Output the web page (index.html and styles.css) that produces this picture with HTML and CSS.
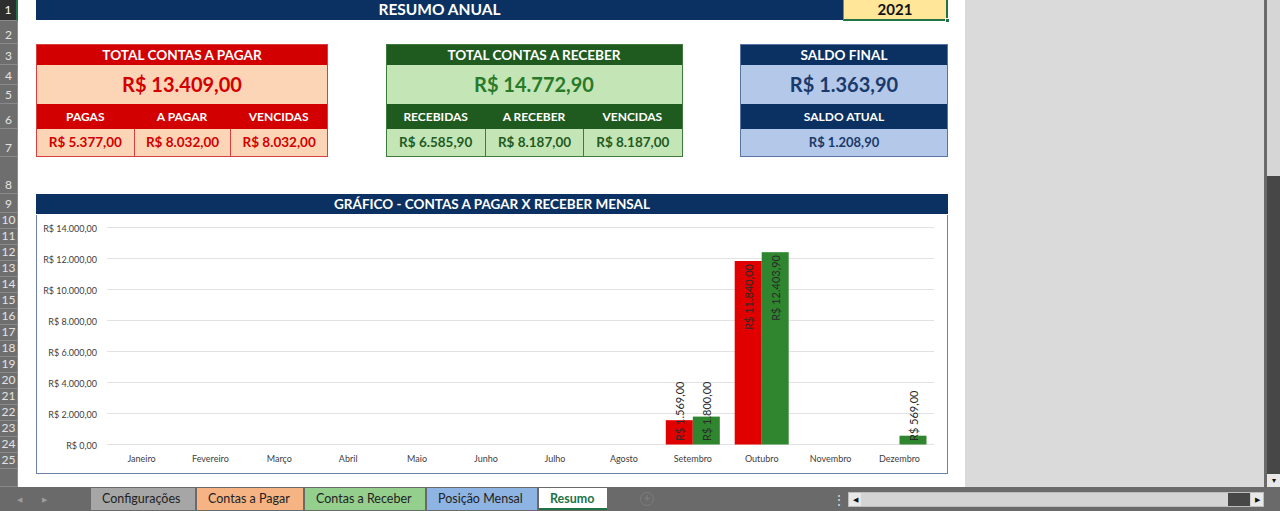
FILE: index.html
```html
<!DOCTYPE html>
<html lang="pt-BR">
<head>
<meta charset="utf-8">
<title>Resumo Anual</title>
<link rel="stylesheet" href="styles.css">
</head>
<body>
<div class="app">
  <!-- row numbers -->
  <div class="rowheads">
    <div class="rh sel">1</div>
    <div class="rh">2</div>
    <div class="rh">3</div>
    <div class="rh">4</div>
    <div class="rh">5</div>
    <div class="rh">6</div>
    <div class="rh">7</div>
    <div class="rh">8</div>
    <div class="rh">9</div>
    <div class="rh">10</div>
    <div class="rh">11</div>
    <div class="rh">12</div>
    <div class="rh">13</div>
    <div class="rh">14</div>
    <div class="rh">15</div>
    <div class="rh">16</div>
    <div class="rh">17</div>
    <div class="rh">18</div>
    <div class="rh">19</div>
    <div class="rh">20</div>
    <div class="rh">21</div>
    <div class="rh">22</div>
    <div class="rh">23</div>
    <div class="rh">24</div>
    <div class="rh">25</div>
    <div class="rh"></div>
  </div>

  <main class="sheet">
    <div class="titlebar">
      <div class="title">RESUMO ANUAL</div>
      <div class="year">2021<span class="handle"></span></div>
    </div>

    <div class="cards">
      <section class="card red">
        <div class="card-head">TOTAL CONTAS A PAGAR</div>
        <div class="card-total">R$ 13.409,00</div>
        <div class="card-subs">
          <div>PAGAS</div><div>A PAGAR</div><div>VENCIDAS</div>
        </div>
        <div class="card-vals">
          <div>R$ 5.377,00</div><div>R$ 8.032,00</div><div>R$ 8.032,00</div>
        </div>
      </section>

      <section class="card green">
        <div class="card-head">TOTAL CONTAS A RECEBER</div>
        <div class="card-total">R$ 14.772,90</div>
        <div class="card-subs">
          <div>RECEBIDAS</div><div>A RECEBER</div><div>VENCIDAS</div>
        </div>
        <div class="card-vals">
          <div>R$ 6.585,90</div><div>R$ 8.187,00</div><div>R$ 8.187,00</div>
        </div>
      </section>

      <section class="card blue">
        <div class="card-head">SALDO FINAL</div>
        <div class="card-total">R$ 1.363,90</div>
        <div class="card-subs single"><div>SALDO ATUAL</div></div>
        <div class="card-vals single"><div>R$ 1.208,90</div></div>
      </section>
    </div>

    <section class="chart">
      <div class="chart-head">GRÁFICO - CONTAS A PAGAR X RECEBER MENSAL</div>
      <div class="chart-body">
        <svg class="plot" width="910" height="257" viewBox="0 0 910 257">
          <g class="grid">
            <line x1="70" y1="12.5" x2="897" y2="12.5"/>
            <line x1="70" y1="43.5" x2="897" y2="43.5"/>
            <line x1="70" y1="74.5" x2="897" y2="74.5"/>
            <line x1="70" y1="105.5" x2="897" y2="105.5"/>
            <line x1="70" y1="136.5" x2="897" y2="136.5"/>
            <line x1="70" y1="167.5" x2="897" y2="167.5"/>
            <line x1="70" y1="198.5" x2="897" y2="198.5"/>
            <line x1="70" y1="229.5" x2="897" y2="229.5"/>
          </g>
          <g class="ylab">
            <text x="60" y="13">R$ 14.000,00</text>
            <text x="60" y="44">R$ 12.000,00</text>
            <text x="60" y="75">R$ 10.000,00</text>
            <text x="60" y="106">R$ 8.000,00</text>
            <text x="60" y="137">R$ 6.000,00</text>
            <text x="60" y="168">R$ 4.000,00</text>
            <text x="60" y="199">R$ 2.000,00</text>
            <text x="60" y="230">R$ 0,00</text>
          </g>
          <g class="xlab">
            <text x="104.5" y="243">Janeiro</text>
            <text x="173.4" y="243">Fevereiro</text>
            <text x="242.3" y="243">Março</text>
            <text x="311.2" y="243">Abril</text>
            <text x="380.1" y="243">Maio</text>
            <text x="449" y="243">Junho</text>
            <text x="518" y="243">Julho</text>
            <text x="586.9" y="243">Agosto</text>
            <text x="655.8" y="243">Setembro</text>
            <text x="724.7" y="243">Outubro</text>
            <text x="793.6" y="243">Novembro</text>
            <text x="862.5" y="243">Dezembro</text>
          </g>
          <g class="bars">
            <rect class="pay" x="628.8" y="205.2" width="27" height="24.3"/>
            <rect class="rec" x="655.8" y="201.6" width="27" height="27.9"/>
            <rect class="pay" x="697.7" y="46" width="27" height="183.5"/>
            <rect class="rec" x="724.7" y="37.2" width="27" height="192.3"/>
            <rect class="rec" x="862.5" y="220.7" width="27" height="8.8"/>
          </g>
          <g class="vlab">
            <text class="from-base" transform="translate(642.3 226) rotate(-90)">R$ 1.569,00</text>
            <text class="from-base" transform="translate(669.3 226) rotate(-90)">R$ 1.800,00</text>
            <text class="from-top" transform="translate(711.2 49) rotate(-90)">R$ 11.840,00</text>
            <text class="from-top" transform="translate(738.2 40) rotate(-90)">R$ 12.403,90</text>
            <text class="from-base" transform="translate(876 226) rotate(-90)">R$ 569,00</text>
          </g>
        </svg>
      </div>
    </section>
  </main>

  <div class="gray"></div>

  <div class="vscroll">
    <div class="vtrack"></div>
    <div class="vthumb"></div>
    <div class="vbtn">&#9662;</div>
  </div>

  <footer class="tabbar">
    <div class="nav"><span>&#9664;</span><span>&#9654;</span></div>
    <div class="tabs">
      <div class="tab t-config">Configurações</div>
      <div class="tab t-pagar">Contas a Pagar</div>
      <div class="tab t-receber">Contas a Receber</div>
      <div class="tab t-posicao">Posição Mensal</div>
      <div class="tab t-resumo">Resumo</div>
    </div>
    <div class="addsheet">+</div>
    <div class="dots">&#8942;</div>
    <div class="hscroll">
      <div class="hbtn">&#9664;</div>
      <div class="htrack"></div>
      <div class="hthumb"></div>
      <div class="hbtn">&#9654;</div>
    </div>
  </footer>
</div>
</body>
</html>
```

FILE: styles.css
```css
* { box-sizing: border-box; }

html, body {
  margin: 0;
  padding: 0;
  width: 1280px;
  height: 511px;
  overflow: hidden;
  background: #6a6a6a;
  font-family: Lato, "Open Sans", sans-serif;
}

.app {
  display: grid;
  grid-template-columns: 18px 947px 299px 16px;
  grid-template-rows: 487px 24px;
  width: 1280px;
  height: 511px;
}

/* ---------- row numbers ---------- */
.rowheads {
  display: grid;
  grid-template-rows: 21px 23px 21px 20px 19px 25px 28px 37px 19px repeat(16, 16px) 1fr;
  background: #6e6e6e;
}
.rh {
  display: flex;
  align-items: flex-end;
  justify-content: center;
  padding-bottom: 1px;
  font-size: 12px;
  line-height: 14px;
  color: #e4e4e4;
  border-bottom: 1px solid #8a8a8a;
  border-right: 1px solid #8a8a8a;
}
.rh.sel {
  background: #2e2e2e;
  color: #fff;
  border-right: 2px solid #217346;
  align-items: center;
}

/* ---------- sheet ---------- */
.sheet {
  background: #fff;
  padding-left: 18px;
  display: flex;
  flex-direction: column;
}

.titlebar {
  display: flex;
  width: 912px;
  height: 21px;
}
.title {
  width: 807px;
  height: 20px;
  background: #0a3161;
  color: #fff;
  font-weight: 700;
  font-size: 15.5px;
  line-height: 18px;
  text-align: center;
}
.year {
  position: relative;
  width: 105px;
  background: #ffe699;
  border-left: 1px solid #5f9a6c;
  border-right: 2px solid #217346;
  border-bottom: 2px solid #217346;
  font-weight: 700;
  font-size: 15px;
  line-height: 19px;
  text-align: center;
  color: #111;
}
.handle {
  position: absolute;
  right: -4px;
  bottom: -4px;
  width: 5px;
  height: 5px;
  background: #217346;
  border: 1px solid #fff;
}

/* ---------- summary cards ---------- */
.cards {
  display: flex;
  justify-content: space-between;
  width: 912px;
  margin-top: 23px;
}
.card {
  display: grid;
  grid-template-rows: 20px 39px 25px 27px;
  border: 1px solid var(--line);
  background: var(--soft);
  text-align: center;
}
.card.red   { width: 292px; --dark: #d20000; --soft: #fcd5b6; --line: #d84040; --ink: #d20000; --big: #d20000; }
.card.green { width: 297px; --dark: #1f5b1f; --soft: #c4e6b7; --line: #3f7a3c; --ink: #1f5b1f; --big: #2a7a2a; }
.card.blue  { width: 208px; --dark: #0a3161; --soft: #b4c8ea; --line: #5b74a3; --ink: #1a3a6b; --big: #1a3a6b; }

.card-head {
  background: var(--dark);
  color: #fff;
  font-weight: 700;
  font-size: 13.6px;
  line-height: 20px;
}
.card-total {
  color: var(--big);
  font-weight: 700;
  font-size: 20px;
  line-height: 39px;
}
.card-subs {
  display: grid;
  grid-template-columns: 1fr 1fr 1fr;
  background: var(--dark);
  color: #fff;
  font-weight: 700;
  font-size: 12px;
  line-height: 25px;
}
.card-vals {
  display: grid;
  grid-template-columns: 1fr 1fr 1fr;
  color: var(--ink);
  font-weight: 700;
  font-size: 13.5px;
  line-height: 27px;
}
.card-vals > div + div { border-left: 1px solid var(--line); }
.card-subs.single, .card-vals.single { grid-template-columns: 1fr; }
.card-vals.single { font-size: 13px; }

/* ---------- chart ---------- */
.chart {
  width: 912px;
  margin-top: 37px;
}
.chart-head {
  height: 20px;
  background: #0a3161;
  color: #fff;
  font-weight: 700;
  font-size: 13.5px;
  line-height: 20px;
  text-align: center;
}
.chart-body {
  height: 259px;
  border: 1px solid #6b82a6;
  border-top: 0;
  background: #fff;
}
.plot { display: block; margin-top: 1px; }
.grid line { stroke: #e2e2e2; stroke-width: 1; }
.ylab text {
  font-size: 9px;
  fill: #404040;
  text-anchor: end;
  dominant-baseline: central;
}
.xlab text {
  font-size: 9px;
  fill: #404040;
  text-anchor: middle;
  dominant-baseline: central;
}
.bars .pay { fill: #e00000; }
.bars .rec { fill: #2f862f; }
.vlab text {
  font-size: 11px;
  fill: #2a2a2a;
  dominant-baseline: central;
}
.vlab .from-base { text-anchor: start; }
.vlab .from-top { text-anchor: end; }

/* ---------- right side ---------- */
.gray {
  background: #dadada;
}
.vscroll {
  display: flex;
  flex-direction: column;
  border-left: 3px solid #6a6a6a;
  background: #d6d6d6;
}
.vtrack { height: 176px; background: #d6d6d6; }
.vthumb { flex: 1; background: #474747; }
.vbtn {
  height: 13px;
  background: #e8e8e8;
  font-size: 8px;
  line-height: 13px;
  text-align: center;
  color: #111;
}

/* ---------- sheet tabs bar ---------- */
.tabbar {
  grid-column: 1 / -1;
  display: flex;
  align-items: center;
  background: #6a6a6a;
  height: 24px;
}
.nav {
  display: flex;
  width: 91px;
  padding-left: 17px;
  gap: 20px;
  font-size: 7px;
  color: #9c9c9c;
}
.tabs {
  display: flex;
  gap: 2px;
  height: 22px;
  align-self: flex-start;
  margin-top: 1px;
}
.tab {
  padding: 0 11px;
  font-size: 12.5px;
  line-height: 22px;
  color: #222;
  white-space: nowrap;
}
.t-config  { width: 104px; background: #a6a6a6; }
.t-pagar   { width: 106px; background: #f6b485; }
.t-receber { width: 120px; background: #95cf8d; }
.t-posicao { width: 110px; background: #8eb4e3; }
.t-resumo  {
  width: 68px;
  background: #fff;
  color: #217346;
  font-weight: 700;
  border-bottom: 2px solid #217346;
  line-height: 21px;
}
.addsheet {
  margin-left: 33px;
  width: 14px;
  height: 14px;
  border: 1.5px solid #7c7c7c;
  border-radius: 50%;
  color: #7c7c7c;
  font-size: 12px;
  line-height: 10px;
  text-align: center;
  font-weight: 700;
}
.dots {
  margin-left: 178px;
  width: 8px;
  color: #d8d8d8;
  font-size: 14px;
  text-align: center;
}
.hscroll {
  display: flex;
  margin-left: 8px;
  width: 416px;
  height: 15px;
  background: #d4d4d4;
  border: 1px solid #bdbdbd;
}
.hbtn {
  width: 12px;
  background: #e8e8e8;
  color: #111;
  font-size: 7px;
  line-height: 13px;
  text-align: center;
}
.htrack { flex: 1; }
.hthumb { width: 22px; background: #474747; margin-right: 1px; }
```
